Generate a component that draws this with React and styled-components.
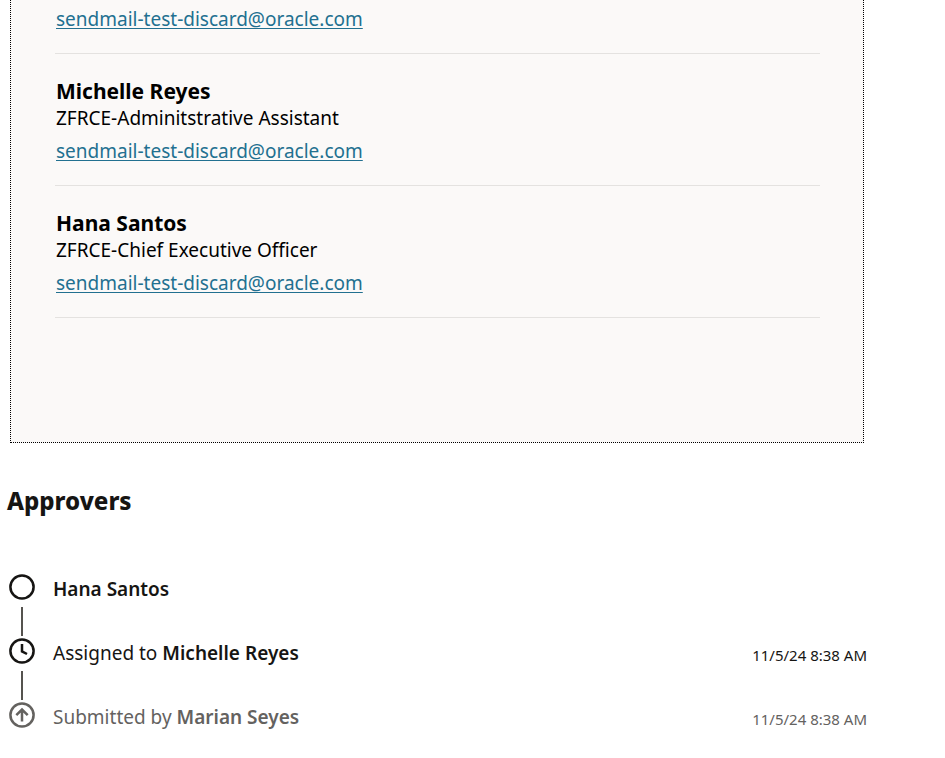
import React from "react";
import styled, { createGlobalStyle } from "styled-components";

const GlobalStyle = createGlobalStyle`
  *, *::before, *::after { box-sizing: border-box; }
  body {
    margin: 0;
    background: #fff;
    color: #161513;
    font-family: "Noto Sans", "Open Sans", sans-serif;
  }
`;

const Page = styled.main`
  padding: 0 78px 24px 7px;
`;

const Panel = styled.section`
  margin: 0 3px;
  padding: 0 43px 124px 44px;
  border: 1px dotted #000;
  border-top: 0;
  background: #fbf9f8;
  color: #000;
`;

const PeopleList = styled.ul`
  margin: 0;
  padding: 0;
  list-style: none;
`;

const Person = styled.li`
  padding: ${(p) => (p.$continued ? "6px" : "23px")} 0 20px 1px;
  border-bottom: 1px solid #e4e2e0;
`;

const PersonName = styled.h3`
  margin: 0;
  font-size: 21px;
  line-height: 28px;
  font-weight: 700;
`;

const JobTitle = styled.p`
  margin: 0 0 6px;
  font-size: 19px;
  line-height: 27px;
`;

const EmailLink = styled.a`
  display: block;
  width: fit-content;
  font-size: 19px;
  line-height: 27px;
  color: #227090;
  text-decoration: underline;
  text-decoration-thickness: 1px;
  text-underline-offset: 2px;
`;

const Heading = styled.h2`
  margin: 40px 0 52px;
  font-size: 24px;
  line-height: 36px;
  font-weight: 800;
`;

const Timeline = styled.ol`
  margin: 0;
  padding: 0;
  list-style: none;
`;

const Step = styled.li`
  display: grid;
  grid-template-columns: 30px 1fr auto;
  column-gap: 16px;
  height: 64px;
  color: ${(p) => (p.$muted ? "#64625f" : "#161513")};
`;

const Marker = styled.div`
  display: flex;
  flex-direction: column;
  align-items: center;
  padding-top: 2px;

  svg { display: block; flex: none; }
`;

const Connector = styled.span`
  width: 2px;
  height: 29px;
  margin-top: 6px;
  background: #55534f;
`;

const StepText = styled.span`
  font-size: 19px;
  line-height: 36px;

  strong { font-weight: 600; }
`;

const Stamp = styled.time`
  font-size: 15px;
  line-height: 40px;
`;

const glyphs = {
  pending: null,
  assigned: <path d="M14 7V14.4L19 17" />,
  submitted: <path d="M14 20.5V9M8.3 14.2 14 8.5 19.7 14.2" />,
};

function StatusIcon({ kind }) {
  return (
    <svg width="28" height="28" viewBox="0 0 28 28" fill="none" stroke="currentColor" strokeWidth="2.5" aria-hidden="true">
      <circle cx="14" cy="14" r="11.6" />
      {glyphs[kind]}
    </svg>
  );
}

const email = "sendmail-test-discard@oracle.com";

const people = [
  { id: 1, continued: true },
  { id: 2, name: "Michelle Reyes", title: "ZFRCE-Adminitstrative Assistant" },
  { id: 3, name: "Hana Santos", title: "ZFRCE-Chief Executive Officer" },
];

const steps = [
  { kind: "pending", label: "", name: "Hana Santos" },
  { kind: "assigned", label: "Assigned to ", name: "Michelle Reyes", time: "11/5/24 8:38 AM" },
  { kind: "submitted", label: "Submitted by ", name: "Marian Seyes", time: "11/5/24 8:38 AM" },
];

export default function App() {
  return (
    <>
      <GlobalStyle />
      <Page>
        <Panel>
          <PeopleList>
            {people.map((p) => (
              <Person key={p.id} $continued={p.continued}>
                {p.name && <PersonName>{p.name}</PersonName>}
                {p.title && <JobTitle>{p.title}</JobTitle>}
                <EmailLink href={`mailto:${email}`}>{email}</EmailLink>
              </Person>
            ))}
          </PeopleList>
        </Panel>
        <Heading>Approvers</Heading>
        <Timeline>
          {steps.map((s, i) => (
            <Step key={s.kind} $muted={s.kind === "submitted"}>
              <Marker>
                <StatusIcon kind={s.kind} />
                {i < steps.length - 1 && <Connector />}
              </Marker>
              <StepText>
                {s.label}
                <strong>{s.name}</strong>
              </StepText>
              {s.time && <Stamp dateTime="2024-11-05T08:38">{s.time}</Stamp>}
            </Step>
          ))}
        </Timeline>
      </Page>
    </>
  );
}
